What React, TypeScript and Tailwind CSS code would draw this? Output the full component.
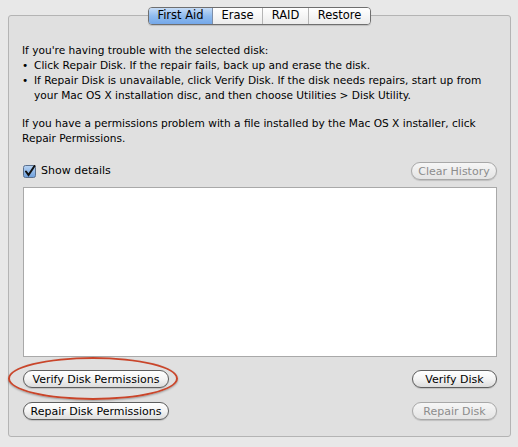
import React from 'react';

const tabs = ['First Aid', 'Erase', 'RAID', 'Restore'];

function PillButton({ label, disabled = false, width }: { label: string; disabled?: boolean; width: string }) {
  return (
    <button
      type="button"
      className={`${width} h-[18px] rounded-full border flex items-center justify-center text-[11px] leading-none shadow-[0_1px_1px_rgba(0,0,0,0.15)] ${
        disabled
          ? 'border-[#a8a8a8] text-[#8c8c8c] bg-gradient-to-b from-[#f6f6f6] to-[#e4e4e4]'
          : 'border-[#5e5e5e] text-black bg-gradient-to-b from-white via-[#f4f4f4] to-[#dcdcdc]'
      }`}
    >
      {label}
    </button>
  );
}

export default function App() {
  return (
    <div className="w-[518px] h-[447px] bg-[#e8e8e8] pt-[15px] pl-[8px] font-['DejaVu_Sans',sans-serif] text-[10.6px] text-black">
      <div className="relative w-[503px] h-[422px] border border-[#b4b4b4] rounded-[3px] bg-[#e0e0e0] flex flex-col pl-[13px] pr-[13px]">
        {/* Segmented tabs sitting on the top border */}
        <div className="absolute top-[-9px] left-[139px] flex h-[18px] rounded-[4px] border border-[#6f6f6f] overflow-hidden text-[11.5px] shadow-[0_1px_1px_rgba(0,0,0,0.15)]">
          {tabs.map((t, i) => (
            <div
              key={t}
              className={`h-full flex items-center justify-center leading-none ${
                i === 0
                  ? 'w-[64px] bg-gradient-to-b from-[#c6dcf6] via-[#8fbbee] to-[#74a8ea] border-r border-[#7d8ea8]'
                  : i === 1
                  ? 'w-[50px] bg-gradient-to-b from-white to-[#ececec] border-r border-[#b5b5b5]'
                  : i === 2
                  ? 'w-[46px] bg-gradient-to-b from-white to-[#ececec] border-r border-[#b5b5b5]'
                  : 'w-[61px] bg-gradient-to-b from-white to-[#ececec]'
              }`}
            >
              {t}
            </div>
          ))}
        </div>

        <div className="pt-[27px] leading-[15px]">
          <p>If you're having trouble with the selected disk:</p>
          <div className="flex">
            <span className="w-[12px] shrink-0">•</span>
            <span>Click Repair Disk. If the repair fails, back up and erase the disk.</span>
          </div>
          <div className="flex">
            <span className="w-[12px] shrink-0">•</span>
            <span>
              If Repair Disk is unavailable, click Verify Disk. If the disk needs repairs, start up from your Mac OS X
              installation disc, and then choose Utilities &gt; Disk Utility.
            </span>
          </div>
          <p className="mt-[13px]">
            If you have a permissions problem with a file installed by the Mac OS X installer, click Repair Permissions.
          </p>
        </div>

        <div className="mt-[16px] flex items-center justify-between pl-[1px]">
          <div className="flex items-center gap-[5px]">
            <svg width="13" height="13" viewBox="0 0 13 13">
              <defs>
                <linearGradient id="cb" x1="0" y1="0" x2="0" y2="1">
                  <stop offset="0" stopColor="#b9d4f3" />
                  <stop offset="1" stopColor="#6d9fdc" />
                </linearGradient>
              </defs>
              <rect x="0.5" y="0.5" width="12" height="12" rx="2" fill="url(#cb)" stroke="#5a6f8c" />
              <path d="M3 6.5 L5.5 10 L11.5 1" fill="none" stroke="#111" strokeWidth="2" strokeLinecap="round" />
            </svg>
            <span className="text-[11px]">Show details</span>
          </div>
          <PillButton label="Clear History" disabled width="w-[86px]" />
        </div>

        <div className="mt-[7px] ml-[1px] h-[170px] bg-white border border-[#a9a9a9]" />

        <div className="mt-[13px] flex justify-between pl-[1px]">
          <div className="relative">
            <PillButton label="Verify Disk Permissions" width="w-[146px]" />
            <div className="absolute left-[-15px] top-[-13px] w-[170px] h-[43px] rounded-[50%] border-2 border-[#c9452a] shadow-[0_1px_2px_rgba(0,0,0,0.3)]" />
          </div>
          <PillButton label="Verify Disk" width="w-[85px]" />
        </div>
        <div className="mt-[14px] flex justify-between pl-[1px]">
          <PillButton label="Repair Disk Permissions" width="w-[146px]" />
          <PillButton label="Repair Disk" disabled width="w-[85px]" />
        </div>
      </div>
    </div>
  );
}
